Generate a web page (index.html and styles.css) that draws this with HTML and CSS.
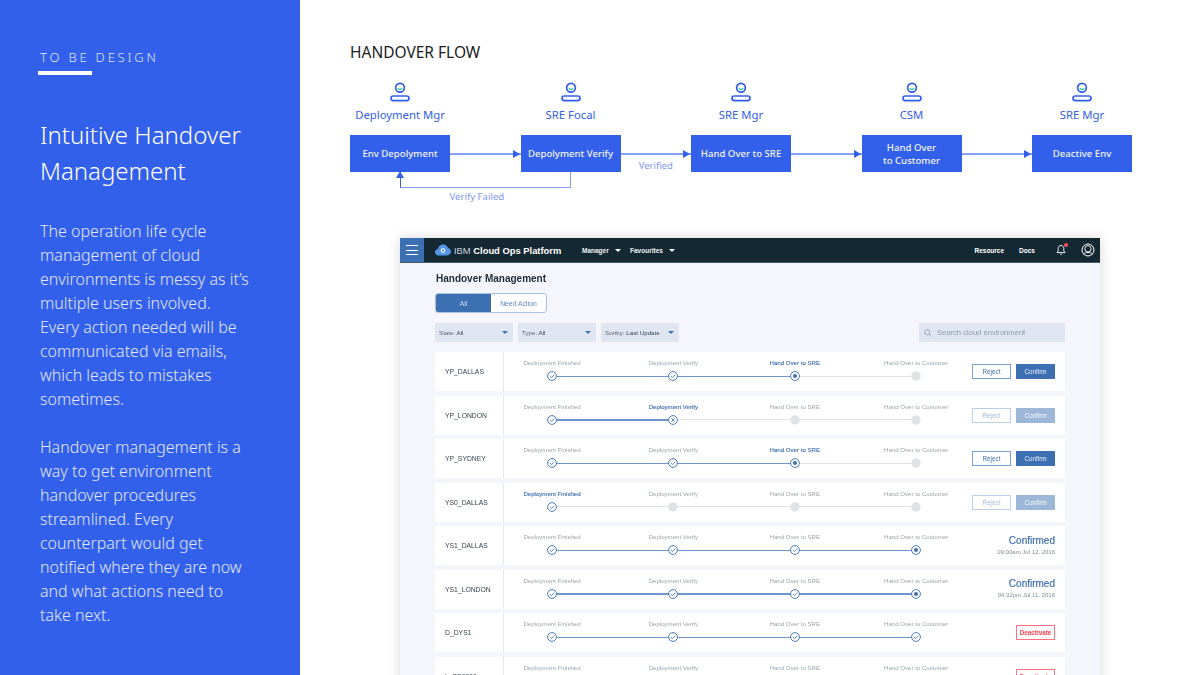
FILE: index.html
```html
<!DOCTYPE html>
<html lang="en">
<head>
<meta charset="utf-8">
<title>Intuitive Handover Management</title>
<link rel="stylesheet" href="styles.css">
</head>
<body>
<svg class="defs" width="0" height="0" aria-hidden="true">
  <symbol id="person" viewBox="0 0 20 20">
    <circle cx="10" cy="5.8" r="4.4" fill="none" stroke="#3360ea" stroke-width="1.7"/>
    <path d="M7.8 6.2c.6 1.5 3.8 1.5 4.4 0" fill="none" stroke="#2cc5b5" stroke-width="1.2"/>
    <rect x="1" y="14" width="18" height="4.6" rx="2.3" fill="none" stroke="#3360ea" stroke-width="1.7"/>
  </symbol>
  <symbol id="check" viewBox="0 0 10 10">
    <circle cx="5" cy="5" r="4.4" fill="#fff" stroke="#4a7bbd" stroke-width="1"/>
    <path d="M2.9 5.2l1.5 1.4 2.8-2.9" fill="none" stroke="#4a7bbd" stroke-width=".9"/>
  </symbol>
  <symbol id="cross" viewBox="0 0 10 10">
    <circle cx="5" cy="5" r="4.4" fill="#fff" stroke="#4a7bbd" stroke-width="1"/>
    <path d="M3.3 3.3l3.4 3.4M6.7 3.3l-3.4 3.4" fill="none" stroke="#4a7bbd" stroke-width=".9"/>
  </symbol>
  <symbol id="dot" viewBox="0 0 10 10">
    <circle cx="5" cy="5" r="4.4" fill="#fff" stroke="#4a7bbd" stroke-width="1"/>
    <circle cx="5" cy="5" r="2" fill="#3d70b2"/>
  </symbol>
  <symbol id="todo" viewBox="0 0 10 10">
    <circle cx="5" cy="5" r="4.7" fill="#dfe3e6"/>
  </symbol>
</svg>

<div class="page">
  <aside class="side">
    <div class="eyebrow">TO BE DESIGN</div>
    <div class="rule"></div>
    <h1 class="side-title">Intuitive Handover<br>Management</h1>
    <p class="side-text">The operation life cycle<br>management of cloud<br>environments is messy as it’s<br>multiple users involved.<br>Every action needed will be<br>communicated via emails,<br>which leads to mistakes<br>sometimes.</p>
    <p class="side-text">Handover management is a<br>way to get environment<br>handover procedures<br>streamlined. Every<br>counterpart would get<br>notified where they are now<br>and what actions need to<br>take next.</p>
  </aside>

  <main class="main">
    <h2 class="flow-title">HANDOVER FLOW</h2>

    <div class="flow">
      <div class="step">
        <svg class="person"><use href="#person"/></svg>
        <div class="role">Deployment Mgr</div>
        <div class="box">Env Depolyment</div>
      </div>
      <div class="link"><span class="head"></span></div>
      <div class="step">
        <svg class="person"><use href="#person"/></svg>
        <div class="role">SRE Focal</div>
        <div class="box">Depolyment Verify</div>
        <div class="return"><span class="return-head"></span></div>
        <div class="return-label">Verify Failed</div>
      </div>
      <div class="link"><span class="head"></span><span class="link-label">Verified</span></div>
      <div class="step">
        <svg class="person"><use href="#person"/></svg>
        <div class="role">SRE Mgr</div>
        <div class="box">Hand Over to SRE</div>
      </div>
      <div class="link"><span class="head"></span></div>
      <div class="step">
        <svg class="person"><use href="#person"/></svg>
        <div class="role">CSM</div>
        <div class="box">Hand Over<br>to Customer</div>
      </div>
      <div class="link"><span class="head"></span></div>
      <div class="step">
        <svg class="person"><use href="#person"/></svg>
        <div class="role">SRE Mgr</div>
        <div class="box">Deactive Env</div>
      </div>
    </div>

    <section class="mock">
      <header class="nav">
        <div class="burger"><span></span><span></span><span></span></div>
        <svg class="cloud" width="16" height="12" viewBox="0 0 16 12">
          <path d="M3.6 11.5C1.6 11.5 0 10.1 0 8.3c0-1.6 1.2-2.9 2.8-3.2C3.3 2.6 5.5.5 8.2.5c2.3 0 4.3 1.5 4.9 3.6 1.7.3 2.9 1.7 2.9 3.5 0 2.1-1.7 3.9-3.9 3.9z" fill="#5596e6"/>
          <circle cx="8" cy="6.5" r="1.8" fill="none" stroke="#fff" stroke-width="1.1"/>
        </svg>
        <div class="brand"><span class="brand-light">IBM</span> Cloud Ops Platform</div>
        <div class="menu">Manager<i class="caret"></i></div>
        <div class="menu">Favourites<i class="caret"></i></div>
        <div class="nav-right">
          <span class="nav-link">Resource</span>
          <span class="nav-link">Docs</span>
          <span class="bell">
            <svg width="12" height="12" viewBox="0 0 12 12"><path d="M6 1.5c-1.8 0-2.8 1.3-2.8 3v2.4L2 8.6h8L8.8 6.9V4.5c0-1.7-1-3-2.8-3zM5 9.8c.2.8 1.8.8 2 0" fill="none" stroke="#fff" stroke-width=".9"/></svg>
            <i class="badge"></i>
          </span>
          <svg class="avatar" width="14" height="14" viewBox="0 0 14 14"><circle cx="7" cy="7" r="6" fill="none" stroke="#fff" stroke-width="1"/><circle cx="7" cy="5.8" r="3.2" fill="none" stroke="#fff" stroke-width=".9"/><path d="M2.6 11c2-2 6.8-2 8.8 0" fill="none" stroke="#fff" stroke-width=".9"/></svg>
        </div>
      </header>

      <div class="content">
        <h3 class="page-title">Handover Management</h3>
        <div class="tabs"><span class="tab tab-on">All</span><span class="tab">Need Action</span></div>
        <div class="filters">
          <div class="select"><span><span class="muted">State:</span> All</span><i class="caret caret-blue"></i></div>
          <div class="select"><span><span class="muted">Type:</span> All</span><i class="caret caret-blue"></i></div>
          <div class="select"><span><span class="muted">Sortby:</span> Last Update</span><i class="caret caret-blue"></i></div>
          <div class="search">
            <svg width="8" height="8" viewBox="0 0 8 8"><circle cx="3.3" cy="3.3" r="2.5" fill="none" stroke="#8c9ba5" stroke-width=".8"/><path d="M5.2 5.2L7.5 7.5" stroke="#8c9ba5" stroke-width=".9"/></svg>
            <span>Search cloud environment</span>
          </div>
        </div>

        <div class="rows">
          <div class="row">
            <div class="name">YP_DALLAS</div>
            <div class="stages">
              <div class="stage done"><span class="label">Deployment Finished</span><svg class="mark"><use href="#check"/></svg></div>
              <div class="stage done"><span class="label">Deployment Verify</span><svg class="mark"><use href="#check"/></svg></div>
              <div class="stage current"><span class="label">Hand Over to SRE</span><svg class="mark"><use href="#dot"/></svg></div>
              <div class="stage"><span class="label">Hand Over to Customer</span><svg class="mark"><use href="#todo"/></svg></div>
            </div>
            <div class="actions"><span class="btn btn-line">Reject</span><span class="btn btn-fill">Confirm</span></div>
          </div>
          <div class="row">
            <div class="name">YP_LONDON</div>
            <div class="stages">
              <div class="stage done"><span class="label">Deployment Finished</span><svg class="mark"><use href="#check"/></svg></div>
              <div class="stage current"><span class="label">Deployment Verify</span><svg class="mark"><use href="#cross"/></svg></div>
              <div class="stage"><span class="label">Hand Over to SRE</span><svg class="mark"><use href="#todo"/></svg></div>
              <div class="stage"><span class="label">Hand Over to Customer</span><svg class="mark"><use href="#todo"/></svg></div>
            </div>
            <div class="actions is-off"><span class="btn btn-line">Reject</span><span class="btn btn-fill">Confirm</span></div>
          </div>
          <div class="row">
            <div class="name">YP_SYDNEY</div>
            <div class="stages">
              <div class="stage done"><span class="label">Deployment Finished</span><svg class="mark"><use href="#check"/></svg></div>
              <div class="stage done"><span class="label">Deployment Verify</span><svg class="mark"><use href="#check"/></svg></div>
              <div class="stage current"><span class="label">Hand Over to SRE</span><svg class="mark"><use href="#dot"/></svg></div>
              <div class="stage"><span class="label">Hand Over to Customer</span><svg class="mark"><use href="#todo"/></svg></div>
            </div>
            <div class="actions"><span class="btn btn-line">Reject</span><span class="btn btn-fill">Confirm</span></div>
          </div>
          <div class="row">
            <div class="name">YS0_DALLAS</div>
            <div class="stages">
              <div class="stage current"><span class="label">Deployment Finished</span><svg class="mark"><use href="#check"/></svg></div>
              <div class="stage"><span class="label">Deployment Verify</span><svg class="mark"><use href="#todo"/></svg></div>
              <div class="stage"><span class="label">Hand Over to SRE</span><svg class="mark"><use href="#todo"/></svg></div>
              <div class="stage"><span class="label">Hand Over to Customer</span><svg class="mark"><use href="#todo"/></svg></div>
            </div>
            <div class="actions is-off"><span class="btn btn-line">Reject</span><span class="btn btn-fill">Confirm</span></div>
          </div>
          <div class="row">
            <div class="name">YS1_DALLAS</div>
            <div class="stages">
              <div class="stage done"><span class="label">Deployment Finished</span><svg class="mark"><use href="#check"/></svg></div>
              <div class="stage done"><span class="label">Deployment Verify</span><svg class="mark"><use href="#check"/></svg></div>
              <div class="stage done"><span class="label">Hand Over to SRE</span><svg class="mark"><use href="#check"/></svg></div>
              <div class="stage"><span class="label">Hand Over to Customer</span><svg class="mark"><use href="#dot"/></svg></div>
            </div>
            <div class="status"><div class="status-main">Confirmed</div><div class="status-time">09:00am Jul 12, 2016</div></div>
          </div>
          <div class="row">
            <div class="name">YS1_LONDON</div>
            <div class="stages">
              <div class="stage done"><span class="label">Deployment Finished</span><svg class="mark"><use href="#check"/></svg></div>
              <div class="stage done"><span class="label">Deployment Verify</span><svg class="mark"><use href="#check"/></svg></div>
              <div class="stage done"><span class="label">Hand Over to SRE</span><svg class="mark"><use href="#check"/></svg></div>
              <div class="stage"><span class="label">Hand Over to Customer</span><svg class="mark"><use href="#dot"/></svg></div>
            </div>
            <div class="status"><div class="status-main">Confirmed</div><div class="status-time">04:32pm Jul 11, 2016</div></div>
          </div>
          <div class="row">
            <div class="name">D_DYS1</div>
            <div class="stages">
              <div class="stage done"><span class="label">Deployment Finished</span><svg class="mark"><use href="#check"/></svg></div>
              <div class="stage done"><span class="label">Deployment Verify</span><svg class="mark"><use href="#check"/></svg></div>
              <div class="stage done"><span class="label">Hand Over to SRE</span><svg class="mark"><use href="#check"/></svg></div>
              <div class="stage"><span class="label">Hand Over to Customer</span><svg class="mark"><use href="#check"/></svg></div>
            </div>
            <div class="actions"><span class="btn btn-danger">Deactivate</span></div>
          </div>
          <div class="row">
            <div class="name">L_SS0000</div>
            <div class="stages">
              <div class="stage done"><span class="label">Deployment Finished</span><svg class="mark"><use href="#check"/></svg></div>
              <div class="stage done"><span class="label">Deployment Verify</span><svg class="mark"><use href="#check"/></svg></div>
              <div class="stage done"><span class="label">Hand Over to SRE</span><svg class="mark"><use href="#check"/></svg></div>
              <div class="stage"><span class="label">Hand Over to Customer</span><svg class="mark"><use href="#check"/></svg></div>
            </div>
            <div class="actions"><span class="btn btn-danger">Deactivate</span></div>
          </div>
        </div>
      </div>
    </section>
  </main>
</div>
</body>
</html>
```

FILE: styles.css
```css
* { box-sizing: border-box; }
html, body { margin: 0; padding: 0; height: 675px; overflow: hidden; background: #fff; }
body { font-family: "Noto Sans", "Liberation Sans", sans-serif; }
.defs { position: absolute; }
.page { display: flex; height: 675px; overflow: hidden; }

/* Left panel */
.side { flex: 0 0 300px; background: #3360ea; color: #fff; padding: 48px 0 0 40px; }
.eyebrow { font-size: 13px; line-height: 18px; letter-spacing: 2.8px; color: #dfe6fd; font-weight: 300; white-space: nowrap; }
.rule { width: 54px; height: 4px; background: #fff; margin: 5px 0 0 -2px; }
.side-title { margin: 42px 0 0; font-size: 24px; line-height: 36px; font-weight: 300; white-space: nowrap; }
.side-text { margin: 30px 0 24px; font-size: 16px; line-height: 24px; font-weight: 300; color: #e1e7fc; white-space: nowrap; }
.side-text + .side-text { margin-top: 24px; }

/* Flow */
.main { flex: 1; padding: 42px 0 0 50px; min-width: 0; }
.flow-title { margin: 0; font-size: 15.5px; line-height: 20px; font-weight: 400; color: #1c1c1c; white-space: nowrap; }
.flow { display: flex; width: 782px; margin-top: 20px; }
.step { flex: 0 0 100px; display: flex; flex-direction: column; align-items: center; position: relative; }
.person { width: 20px; height: 20px; display: block; }
.role { margin-top: 5px; font-size: 11.3px; line-height: 16px; color: #3360ea; white-space: nowrap; }
.box { margin-top: 12px; width: 100px; height: 37px; background: #3360ea; color: #f2f5fe; font-size: 9.6px; line-height: 13px; font-weight: 500; display: flex; align-items: center; justify-content: center; text-align: center; white-space: nowrap; }
.link { flex: 1; align-self: flex-end; height: 37px; position: relative; }
.link::before { content: ""; position: absolute; left: 0; right: 0; top: 18px; height: 1.5px; background: #86a0f5; }
.head { position: absolute; right: 1px; top: 15px; border-left: 7px solid #3360ea; border-top: 4px solid transparent; border-bottom: 4px solid transparent; }
.link-label { position: absolute; left: 0; right: 0; top: 24px; text-align: center; font-size: 9.5px; line-height: 13px; color: #7d99f4; }
.return { position: absolute; right: 50%; top: 90px; width: 171px; height: 16px; border-right: 1.5px solid #86a0f5; border-bottom: 1.5px solid #86a0f5; border-left: 1.5px solid #3360ea; }
.return-head { position: absolute; left: -5px; top: -1px; border-bottom: 7px solid #3360ea; border-left: 4px solid transparent; border-right: 4px solid transparent; }
.return-label { position: absolute; left: -71px; top: 108px; font-size: 9.6px; line-height: 13px; color: #7d99f4; white-space: nowrap; }

/* Product screenshot */
.mock { width: 700px; height: 500px; margin: 66px 0 0 50px; background: #f4f6fb; box-shadow: 0 0 12px rgba(0,0,0,.16); font-family: "Liberation Sans", Arial, sans-serif; filter: blur(.45px); }
.nav { height: 25px; background: #152934; border-bottom: 1px solid #4a5c67; display: flex; align-items: center; color: #fff; }
.burger { flex: 0 0 24px; height: 24px; background: #3d70b2; display: flex; flex-direction: column; justify-content: center; align-items: center; gap: 3.8px; }
.burger span { width: 12px; height: 1px; background: #fff; }
.cloud { margin-left: 11px; flex: none; }
.brand { margin-left: 3px; width: 128px; font-size: 9.4px; font-weight: 700; white-space: nowrap; }
.brand-light { font-weight: 400; color: #c8d2d8; }
.menu { font-size: 6.5px; font-weight: 700; width: 48px; color: #eef1f3; white-space: nowrap; display: flex; align-items: center; }
.caret { display: inline-block; margin-left: 6px; border-top: 3px solid #fff; border-left: 3px solid transparent; border-right: 3px solid transparent; }
.caret-blue { border-top-color: #3d70b2; margin-left: 0; }
.nav-right { margin-left: auto; display: flex; align-items: center; padding-right: 5px; }
.nav-link { font-size: 6.5px; font-weight: 700; margin-right: 15px; }
.nav-link + .nav-link { margin-right: 20px; }
.bell { position: relative; width: 12px; height: 12px; margin-right: 14px; }
.bell svg { display: block; }
.badge { position: absolute; right: -1px; top: -1px; width: 4px; height: 4px; border-radius: 50%; background: #ff5050; }
.content { padding: 10px 35px 0; }
.page-title { margin: 0; font-size: 10px; line-height: 12px; font-weight: 700; color: #1f2d36; white-space: nowrap; padding-left: 1px; }
.tabs { display: flex; width: 112px; height: 20px; margin-top: 8px; border: 1px solid #a9c0e0; border-radius: 3px; overflow: hidden; background: #fff; }
.tab { flex: 1; display: flex; align-items: center; justify-content: center; font-size: 6.8px; color: #5a8ac8; }
.tab-on { flex: 0 0 55px; background: #3d70b2; color: #cfdcef; }
.filters { display: flex; gap: 5px; margin-top: 10px; }
.select { width: 78px; height: 19px; background: #dfe6f1; display: flex; align-items: center; justify-content: space-between; padding: 0 5px 0 4px; font-size: 6.2px; color: #33434d; white-space: nowrap; }
.muted { color: #5a6872; }
.search { margin-left: auto; width: 146px; height: 19px; background: #dfe6f1; display: flex; align-items: center; gap: 5px; padding-left: 5px; font-size: 7.6px; color: #8c9ba5; }
.rows { margin-top: 10px; display: flex; flex-direction: column; gap: 4.5px; }
.row { height: 39px; flex: none; background: #fff; display: flex; align-items: center; padding-right: 10px; }
.name { flex: 0 0 69px; height: 39px; line-height: 39px; padding-left: 10px; border-right: 1px solid #e4e9f1; font-size: 6.8px; color: #33434d; white-space: nowrap; }
.stages { display: flex; gap: 25.4px; height: 39px; }
.stage { flex: 0 0 96px; position: relative; display: flex; flex-direction: column; align-items: center; padding-top: 7px; }
.stage + .stage::before { content: ""; position: absolute; top: 23.5px; right: 50%; width: 121.4px; height: 1px; background: #dfe3e6; }
.stage.done + .stage::before { height: 1.5px; background: #6e97d0; }
.label { position: relative; font-size: 6.1px; line-height: 8px; color: #9aa5ac; white-space: nowrap; }
.current .label { color: #3d70b2; -webkit-text-stroke: .12px #3d70b2; }
.mark { position: relative; z-index: 1; width: 10px; height: 10px; margin-top: 4px; display: block; }
.actions { margin-left: auto; display: flex; gap: 5px; }
.btn { width: 39px; height: 15px; display: flex; align-items: center; justify-content: center; font-size: 6.3px; }
.btn-line { background: #fff; border: 1px solid #7a9fd4; color: #3d70b2; }
.btn-fill { background: #3d70b2; color: #e8eef7; }
.btn-danger { background: #fff; border: 1px solid #ff7080; color: #ff3b4e; font-weight: 700; }
.is-off .btn { opacity: .5; }
.status { margin-left: auto; text-align: right; }
.status-main { font-size: 10px; line-height: 12px; color: #3d70b2; white-space: nowrap; -webkit-text-stroke: .2px #3d70b2; }
.status-time { font-size: 6px; line-height: 9px; margin-top: 1px; color: #7f8c95; white-space: nowrap; }
```
